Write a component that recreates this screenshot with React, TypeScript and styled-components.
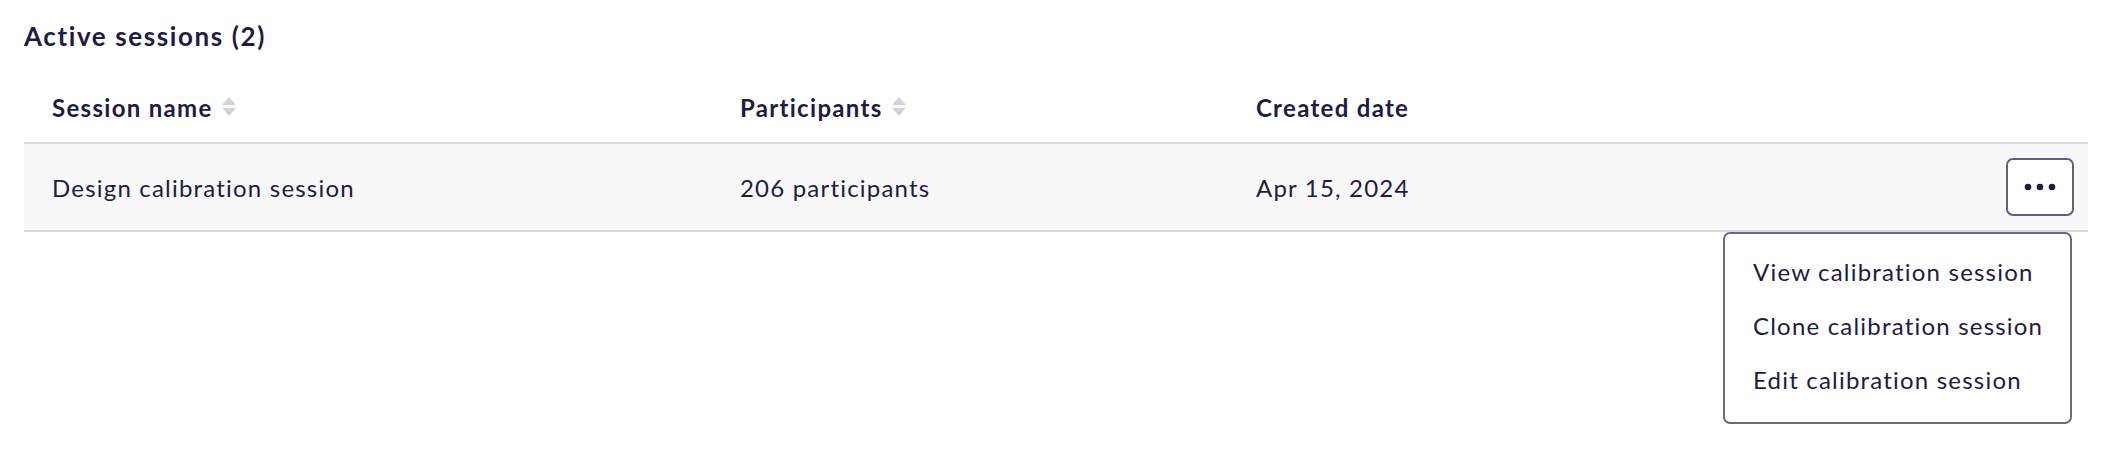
import React from "react";
import styled, { createGlobalStyle } from "styled-components";

const Global = createGlobalStyle`
  html, body { margin: 0; padding: 0; background: #ffffff; }
  body { font-family: Lato, "Noto Sans", sans-serif; color: #1e1b45; }
`;

const Page = styled.div`
  position: relative;
  min-height: 458px;
  box-sizing: border-box;
  padding: 18px 22px 0 24px;
`;

const Title = styled.h2`
  margin: 0;
  font-size: 26px;
  line-height: 36px;
  font-weight: 700;
  letter-spacing: 1.6px;
  color: #1e1b45;
`;

const Table = styled.div`
  margin-top: 18px;
`;

const Row = styled.div<{ $header?: boolean }>`
  display: grid;
  grid-template-columns: 33.333% 25% 25% 1fr;
  height: ${(p) => (p.$header ? 70 : 86)}px;
  border-bottom: 2px solid #d9d9e2;
  background: ${(p) => (p.$header ? "#ffffff" : "#f8f8f8")};
`;

const Cell = styled.div<{ $header?: boolean }>`
  display: flex;
  align-items: center;
  padding-left: 28px;
  font-size: 24px;
  font-weight: ${(p) => (p.$header ? 700 : 400)};
  letter-spacing: ${(p) => (p.$header ? 1.3 : 1.2)}px;
  color: #1e1b45;
  white-space: nowrap;
`;

const ActionCell = styled.div`
  position: relative;
  display: flex;
  align-items: center;
  justify-content: flex-end;
  padding-right: 14px;
`;

const SortIcon = styled.svg`
  margin-left: 8px;
  flex: none;
`;

const MoreButton = styled.button`
  width: 68px;
  height: 58px;
  display: flex;
  align-items: center;
  justify-content: center;
  background: #ffffff;
  border: 2px solid #625f80;
  border-radius: 7px;
  padding: 0;
  cursor: pointer;
`;

const Menu = styled.ul`
  position: absolute;
  top: calc(100% + 2px);
  right: 16px;
  width: 349px;
  margin: 0;
  padding: 10px 0 16px;
  list-style: none;
  background: #ffffff;
  border: 2px solid #6b6886;
  border-radius: 7px;
  box-sizing: border-box;
  z-index: 2;
`;

const MenuItem = styled.li`
  height: 54px;
  display: flex;
  align-items: center;
  padding-left: 28px;
  font-size: 24px;
  letter-spacing: 1.2px;
  color: #1e1b45;
  white-space: nowrap;
  cursor: pointer;
`;

const Sort = () => (
  <SortIcon width="16" height="22" viewBox="0 0 16 22">
    <path d="M8 1 L15 9 L1 9 Z" fill="#d2d1dc" />
    <path d="M1 12 L15 12 L8 20 Z" fill="#d2d1dc" />
  </SortIcon>
);

const Dots = () => (
  <svg width="32" height="8" viewBox="0 0 32 8">
    <circle cx="4" cy="4" r="3.3" fill="#1e1b45" />
    <circle cx="16" cy="4" r="3.3" fill="#1e1b45" />
    <circle cx="28" cy="4" r="3.3" fill="#1e1b45" />
  </svg>
);

export default function App() {
  return (
    <>
      <Global />
      <Page>
        <Title>Active sessions (2)</Title>
        <Table>
          <Row $header>
            <Cell $header>
              Session name
              <Sort />
            </Cell>
            <Cell $header>
              Participants
              <Sort />
            </Cell>
            <Cell $header>Created date</Cell>
            <ActionCell />
          </Row>
          <Row>
            <Cell>Design calibration session</Cell>
            <Cell>206 participants</Cell>
            <Cell>Apr 15, 2024</Cell>
            <ActionCell>
              <MoreButton aria-label="More actions">
                <Dots />
              </MoreButton>
              <Menu>
                <MenuItem>View calibration session</MenuItem>
                <MenuItem>Clone calibration session</MenuItem>
                <MenuItem>Edit calibration session</MenuItem>
              </Menu>
            </ActionCell>
          </Row>
        </Table>
      </Page>
    </>
  );
}
